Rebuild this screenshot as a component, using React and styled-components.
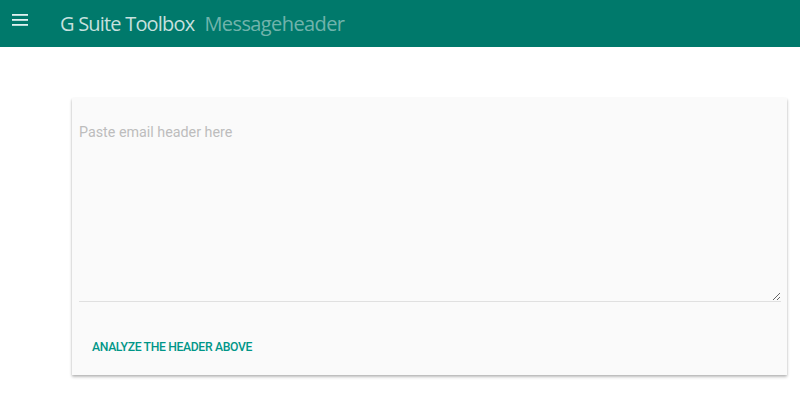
import React, { useState } from 'react';
import styled, { createGlobalStyle } from 'styled-components';

const GlobalStyle = createGlobalStyle`
  html, body {
    margin: 0;
    padding: 0;
    background: #ffffff;
    font-family: Roboto, 'Liberation Sans', sans-serif;
  }
`;

const Toolbar = styled.header`
  height: 47px;
  background-color: #00796b;
  display: flex;
  align-items: center;
`;

const MenuButton = styled.button`
  width: 40px;
  height: 40px;
  padding: 0;
  border: none;
  background: none;
  display: flex;
  align-items: center;
  justify-content: center;
  cursor: pointer;
  margin-top: -8px;
`;

const Title = styled.h1`
  margin: 0 0 0 20px;
  font-family: 'Open Sans', Roboto, sans-serif;
  font-size: 20px;
  font-weight: 500;
  letter-spacing: -0.8px;
  color: rgba(255, 255, 255, 0.78);
  display: flex;
  align-items: baseline;
  gap: 10px;
`;

const Subtitle = styled.span`
  font-weight: 400;
  letter-spacing: -0.6px;
  color: rgba(255, 255, 255, 0.45);
`;

const Main = styled.main`
  padding: 51px 13px 20px 72px;
`;

const Card = styled.section`
  background-color: #fafafa;
  box-shadow: 0 2px 3px rgba(0, 0, 0, 0.22), 0 1px 2px rgba(0, 0, 0, 0.12);
  padding: 24px 6px 15px 7px;
  display: flex;
  flex-direction: column;
`;

const HeaderInput = styled.textarea`
  height: 173px;
  padding: 2px 0 4px 0;
  border: none;
  border-bottom: 1px solid #e0e0e0;
  background: transparent;
  font-family: Roboto, sans-serif;
  font-size: 14.3px;
  color: #333;
  outline: none;
  resize: vertical;

  &::placeholder {
    color: #bdbdbd;
  }
`;

const Actions = styled.div`
  padding-top: 32px;
  display: flex;
`;

const Button = styled.button`
  padding: 6px 13px;
  border: none;
  background: none;
  font-family: Roboto, sans-serif;
  font-size: 12.2px;
  font-weight: 500;
  letter-spacing: -0.35px;
  color: #009688;
  text-transform: uppercase;
  cursor: pointer;
`;

function App() {
  const [header, setHeader] = useState('');

  return (
    <>
      <GlobalStyle />
      <Toolbar>
        <MenuButton aria-label="menu">
          <svg width="16" height="12" viewBox="0 0 16 12">
            <rect x="0" y="0" width="16" height="1.8" fill="#e0f2f1" />
            <rect x="0" y="5" width="16" height="1.8" fill="#e0f2f1" />
            <rect x="0" y="10" width="16" height="1.8" fill="#e0f2f1" />
          </svg>
        </MenuButton>
        <Title>
          G Suite Toolbox
          <Subtitle>Messageheader</Subtitle>
        </Title>
      </Toolbar>
      <Main>
        <Card>
          <HeaderInput
            placeholder="Paste email header here"
            value={header}
            onChange={(e) => setHeader(e.target.value)}
          />
          <Actions>
            <Button type="button">Analyze the header above</Button>
          </Actions>
        </Card>
      </Main>
    </>
  );
}

export default App;
